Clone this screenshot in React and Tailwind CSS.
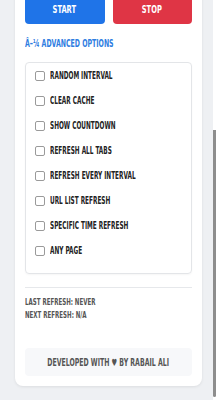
import React from 'react';

const OPTIONS = [
  'Random Interval',
  'Clear Cache',
  'Show Countdown',
  'Refresh All Tabs',
  'Refresh Every Interval',
  'URL List Refresh',
  'Specific Time Refresh',
  'Any Page',
];

const font = { fontFamily: '"DejaVu Sans Condensed", "Liberation Sans Narrow", "DejaVu Sans", sans-serif' };

const App = () => {
  return (
    <div className="w-[218px] h-[400px] overflow-hidden flex bg-white uppercase font-bold" style={font}>
      <div className="w-[213px] h-[400px] bg-[#eef0f3] pl-[15px]">
        <div className="w-[187px] -mt-[14px] bg-white rounded-lg shadow-[0_1px_3px_rgba(0,0,0,0.08)] p-[10px]">
          <div className="grid grid-cols-2 gap-2 h-[28px]">
            <button className="bg-[#1f74e8] text-white rounded text-[11px] uppercase font-bold flex items-center justify-center">
              <span className="inline-block scale-x-[0.68]">Start</span>
            </button>
            <button className="bg-[#df3545] text-white rounded text-[11px] uppercase font-bold flex items-center justify-center">
              <span className="inline-block scale-x-[0.68]">Stop</span>
            </button>
          </div>
          <div className="mt-[14px] h-[12px] leading-[12px] text-[11px] text-[#2f7de1] whitespace-nowrap">
            <span className="inline-block scale-x-[0.63] origin-left">â–¼ Advanced Options</span>
          </div>
          <div className="mt-[12px] border border-[#e3e5e8] rounded pb-[10px] pl-[9px] shadow-[0_1px_2px_rgba(0,0,0,0.04)]">
            {OPTIONS.map(o => (
              <label key={o} className="flex items-center h-[25px] gap-[5px]">
                <span className="w-[10px] h-[10px] border border-[#9a9a9a] rounded-[2px] bg-white shrink-0" />
                <span className="inline-block text-[10px] text-[#222] scale-x-[0.64] origin-left whitespace-nowrap">{o}</span>
              </label>
            ))}
          </div>
          <div className="mt-[13px] h-px bg-[#e6e8eb]" />
          <div className="mt-[8px] text-[9px] leading-[13px] text-[#555] whitespace-nowrap">
            <div><span className="inline-block scale-x-[0.68] origin-left">Last Refresh: Never</span></div>
            <div><span className="inline-block scale-x-[0.68] origin-left">Next Refresh: N/A</span></div>
          </div>
          <div className="mt-[26px] h-[28px] bg-[#f7f8fa] rounded flex items-center justify-center text-[10px] text-[#555] whitespace-nowrap">
            <span className="inline-block scale-x-[0.69]">Developed with ♥ by Rabail Ali</span>
          </div>
        </div>
      </div>
      <div className="w-[5px] h-[400px] bg-white">
        <div className="mt-[130px] w-[3px] h-[267px] bg-[#8d8d8d] rounded-b-sm" />
      </div>
    </div>
  );
};

export default App;
